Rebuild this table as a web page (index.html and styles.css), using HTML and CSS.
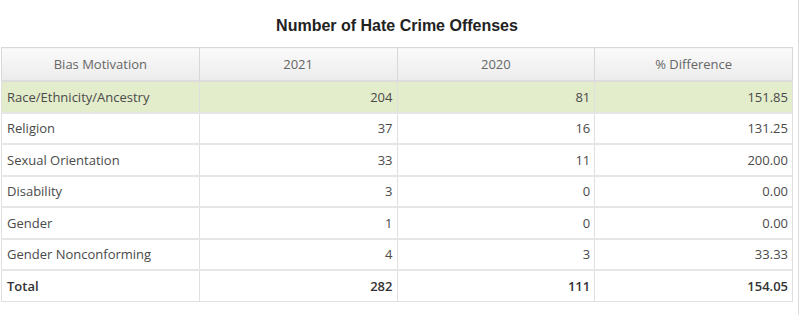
FILE: index.html
```html
<!DOCTYPE html>
<html>
<head>
<meta charset="utf-8">
<link rel="stylesheet" href="styles.css">
</head>
<body>
<div class="page">
  <h1 class="title">Number of Hate Crime Offenses</h1>
  <table class="grid">
    <thead>
      <tr><th>Bias Motivation</th><th>2021</th><th>2020</th><th>% Difference</th></tr>
    </thead>
    <tbody>
      <tr class="hl"><td>Race/Ethnicity/Ancestry</td><td class="n">204</td><td class="n">81</td><td class="n">151.85</td></tr>
      <tr><td>Religion</td><td class="n">37</td><td class="n">16</td><td class="n">131.25</td></tr>
      <tr><td>Sexual Orientation</td><td class="n">33</td><td class="n">11</td><td class="n">200.00</td></tr>
      <tr><td>Disability</td><td class="n">3</td><td class="n">0</td><td class="n">0.00</td></tr>
      <tr><td>Gender</td><td class="n">1</td><td class="n">0</td><td class="n">0.00</td></tr>
      <tr><td>Gender Nonconforming</td><td class="n">4</td><td class="n">3</td><td class="n">33.33</td></tr>
      <tr class="total"><td>Total</td><td class="n">282</td><td class="n">111</td><td class="n">154.05</td></tr>
    </tbody>
  </table>
</div>
</body>
</html>
```
FILE: styles.css
```css
html, body { margin: 0; padding: 0; background: #fff; }
.page {
  width: 797px;
  height: 315px;
  border-right: 1px solid #dcdcdc;
  padding: 0 0 0 1px;
}
.title {
  margin: 0;
  padding: 16px 0 0 0;
  height: 47px;
  box-sizing: border-box;
  font-family: "Liberation Sans", Arial, sans-serif;
  font-weight: bold;
  font-size: 16px;
  color: #222;
  text-align: center;
  width: 792px;
  line-height: 20px;
}
.grid {
  width: 792px;
  border-collapse: collapse;
  table-layout: fixed;
  font-family: "Open Sans", sans-serif;
  font-size: 13px;
  color: #4a4a4a;
  border: 1px solid #d8d8d8;
}
.grid th {
  height: 32px;
  padding: 0 5px;
  font-weight: normal;
  color: #666;
  background: linear-gradient(#fafafa, #ececec);
  border: 1px solid #d8d8d8;
  border-bottom: 2px solid #dcdcdc;
}
.grid td {
  height: 29.5px;
  padding: 0 4px 0 5px;
  border: 1px solid #e0e0e0;
  border-top: 2px solid #e6e6e6;
  line-height: 18px;
}
.grid tbody tr:first-child td { border-top: 1px solid #dcdcdc; }
.grid td.n { text-align: right; }
.grid tr.hl td { background: #e3eccb; }
.grid tr.total td { font-weight: 600; color: #333; }
```
